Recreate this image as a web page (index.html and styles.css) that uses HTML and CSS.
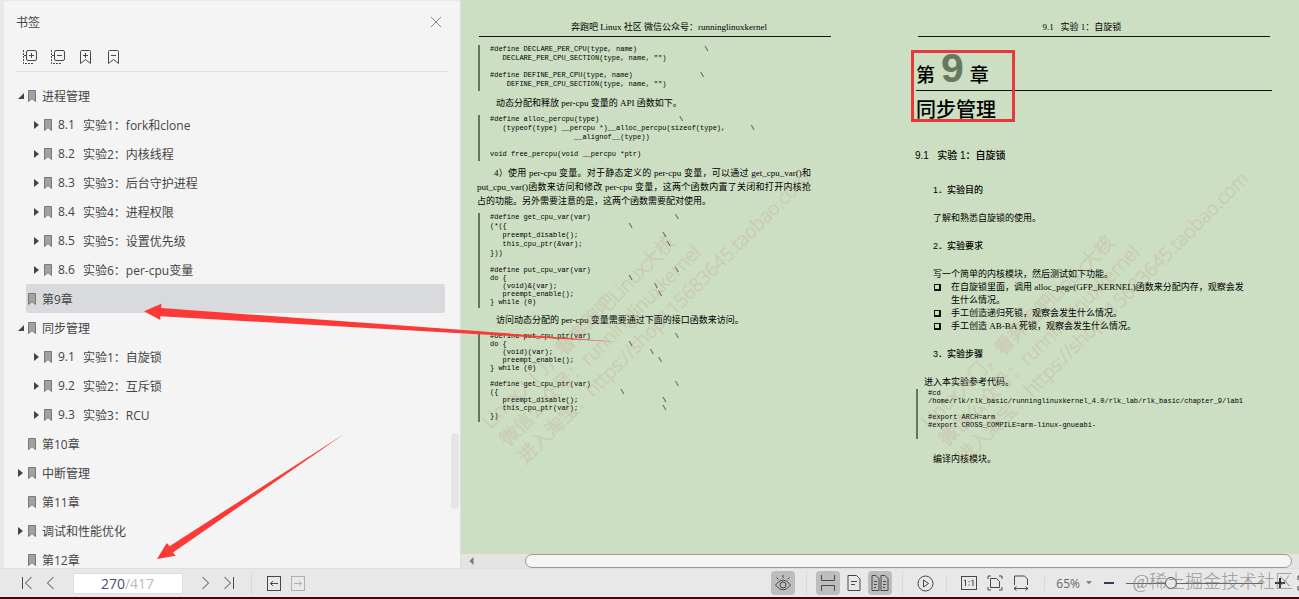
FILE: index.html
```html
<!DOCTYPE html>
<html lang="zh-CN">

<head>
    <meta charset="utf-8">
    <title>书签</title>
    <link rel="stylesheet" href="styles.css">
</head>

<body>
    <svg width="0" height="0" class="sprite">
        <symbol id="mark" viewBox="0 0 8 12">
            <path d="M.5 .5h7v11L4 8.500l-3.500 3z" fill="#a2a2a2" stroke="#777" />
        </symbol>
    </svg>
    <div class="app">
        <div class="main">
            <aside class="sidebar">
                <div class="side-head">
                    <h1>书签</h1>
                    <button class="icon-btn" aria-label="关闭">
                        <svg width="12" height="12" viewBox="0 0 12 12"><path d="M1 1l10 10M11 1L1 11" stroke="#888" /></svg>
                    </button>
                </div>
                <div class="side-tools">
                    <button class="icon-btn" aria-label="全部展开">
                        <svg width="16" height="16" viewBox="0 0 16 16"><rect x="4.500" y="1.500" width="10" height="10" rx="1.500" /><path d="M7 6.500h5M9.500 4v5" /><path d="M1.500 1v13.500H12" stroke-dasharray="2 1" /><path d="M2 6.500h2" /></svg>
                    </button>
                    <button class="icon-btn" aria-label="全部收起">
                        <svg width="16" height="16" viewBox="0 0 16 16"><rect x="4.500" y="1.500" width="10" height="10" rx="1.500" /><path d="M7 6.500h5" /><path d="M1.500 1v13.500H12" stroke-dasharray="2 1" /><path d="M2 6.500h2" /></svg>
                    </button>
                    <button class="icon-btn" aria-label="添加书签">
                        <svg width="16" height="16" viewBox="0 0 16 16"><path d="M2.500 2.500q0-1 1-1h8q1 0 1 1v12l-5-4-5 4z" /><path d="M5 6.500h5M7.500 4v5" /></svg>
                    </button>
                    <button class="icon-btn" aria-label="删除书签">
                        <svg width="16" height="16" viewBox="0 0 16 16"><path d="M2.500 2.500q0-1 1-1h8q1 0 1 1v12l-5-4-5 4z" /><path d="M5 6.500h5" /></svg>
                    </button>
                </div>
                <ul class="tree">
                    <li class="open"><svg class="mark"><use href="#mark" /></svg>进程管理</li>
                    <li class="sub closed"><svg class="mark"><use href="#mark" /></svg><span class="num">8.1</span>实验1：fork和clone</li>
                    <li class="sub closed"><svg class="mark"><use href="#mark" /></svg><span class="num">8.2</span>实验2：内核线程</li>
                    <li class="sub closed"><svg class="mark"><use href="#mark" /></svg><span class="num">8.3</span>实验3：后台守护进程</li>
                    <li class="sub closed"><svg class="mark"><use href="#mark" /></svg><span class="num">8.4</span>实验4：进程权限</li>
                    <li class="sub closed"><svg class="mark"><use href="#mark" /></svg><span class="num">8.5</span>实验5：设置优先级</li>
                    <li class="sub closed"><svg class="mark"><use href="#mark" /></svg><span class="num">8.6</span>实验6：per-cpu变量</li>
                    <li class="current"><svg class="mark"><use href="#mark" /></svg>第9章</li>
                    <li class="open"><svg class="mark"><use href="#mark" /></svg>同步管理</li>
                    <li class="sub closed"><svg class="mark"><use href="#mark" /></svg><span class="num">9.1</span>实验1：自旋锁</li>
                    <li class="sub closed"><svg class="mark"><use href="#mark" /></svg><span class="num">9.2</span>实验2：互斥锁</li>
                    <li class="sub closed"><svg class="mark"><use href="#mark" /></svg><span class="num">9.3</span>实验3：RCU</li>
                    <li><svg class="mark"><use href="#mark" /></svg>第10章</li>
                    <li class="closed"><svg class="mark"><use href="#mark" /></svg>中断管理</li>
                    <li><svg class="mark"><use href="#mark" /></svg>第11章</li>
                    <li class="closed"><svg class="mark"><use href="#mark" /></svg>调试和性能优化</li>
                    <li><svg class="mark"><use href="#mark" /></svg>第12章</li>
                </ul>
                <div class="side-thumb"></div>
            </aside>

            <section class="viewer">
                <div class="spread">
                    <article class="page">
                        <div class="watermark">Linux入门，看奔跑吧Linux大核<br>微信公众号：runninglinuxkernel<br>进入淘宝：https://shop115683645.taobao.com</div>
                        <header class="running">奔跑吧 Linux 社区 微信公众号：runninglinuxkernel</header>
                        <div class="code">
<pre>#define DECLARE_PER_CPU(type, name)                \
   DECLARE_PER_CPU_SECTION(type, name, "")</pre>
<pre>#define DEFINE_PER_CPU(type, name)                \
    DEFINE_PER_CPU_SECTION(type, name, "")</pre>
                        </div>
                        <p class="indent">动态分配和释放 per-cpu 变量的 API 函数如下。</p>
                        <div class="code">
<pre>#define alloc_percpu(type)                   \
   (typeof(type) __percpu *)__alloc_percpu(sizeof(type),      \
                    __alignof__(type))</pre>
<pre>void free_percpu(void __percpu *ptr)</pre>
                        </div>
                        <p class="indent wide">4）使用 per-cpu 变量。对于静态定义的 per-cpu 变量，可以通过 get_cpu_var()和put_cpu_var()函数来访问和修改 per-cpu 变量，这两个函数内置了关闭和打开内核抢占的功能。另外需要注意的是，这两个函数需要配对使用。</p>
                        <div class="code">
<pre>#define get_cpu_var(var)                    \
(*({                             \
   preempt_disable();                    \
   this_cpu_ptr(&amp;var);                    \
}))</pre>
<pre class="tight">#define put_cpu_var(var)                    \
do {                             \
   (void)&amp;(var);                       \
   preempt_enable();                    \
} while (0)</pre>
                        </div>
                        <p class="indent">访问动态分配的 per-cpu 变量需要通过下面的接口函数来访问。</p>
                        <div class="code">
<pre class="tight">#define put_cpu_ptr(var)                    \
do {                             \
   (void)(var);                       \
   preempt_enable();                    \
} while (0)</pre>
<pre class="tight">#define get_cpu_ptr(var)                    \
({                             \
   preempt_disable();                    \
   this_cpu_ptr(var);                    \
})</pre>
                        </div>
                    </article>

                    <article class="page chapter">
                        <div class="watermark">Linux入门，看奔跑吧Linux大核<br>微信公众号：runninglinuxkernel<br>进入淘宝：https://shop115683645.taobao.com</div>
                        <header class="running">9.1 &nbsp; 实验 1：自旋锁</header>
                        <div class="chapter-no">第<b>9</b>章</div>
                        <h2>同步管理</h2>
                        <div class="red-box"></div>
                        <h3>9.1 &nbsp; 实验 1：自旋锁</h3>
                        <div class="body">
                            <h4>1．实验目的</h4>
                            <p>了解和熟悉自旋锁的使用。</p>
                            <h4>2．实验要求</h4>
                            <p>写一个简单的内核模块，然后测试如下功能。</p>
                            <ul class="tasks">
                                <li>在自旋锁里面，调用 alloc_page(GFP_KERNEL)函数来分配内存，观察会发生什么情况。</li>
                                <li>手工创造递归死锁，观察会发生什么情况。</li>
                                <li>手工创造 AB-BA 死锁，观察会发生什么情况。</li>
                            </ul>
                            <h4>3．实验步骤</h4>
                        </div>
                        <p class="enter">进入本实验参考代码。</p>
                        <div class="code shell">
<pre class="tight">#cd
/home/rlk/rlk_basic/runninglinuxkernel_4.0/rlk_lab/rlk_basic/chapter_9/lab1</pre>
<pre class="tight">#export ARCH=arm
#export CROSS_COMPILE=arm-linux-gnueabi-</pre>
                        </div>
                        <div class="body">
                            <p>编译内核模块。</p>
                        </div>
                    </article>
                </div>
                <div class="hscroll">
                    <svg width="5" height="8" viewBox="0 0 5 8"><path d="M4.500 0v8L.5 4z" fill="#777" /></svg>
                    <div class="hthumb"></div>
                </div>
            </section>
        </div>

        <footer class="status">
            <div class="group nav">
                <button class="icon-btn" aria-label="第一页"><svg width="12" height="14" viewBox="0 0 12 14"><path d="M1.500 1v12M10.500 1l-6 6 6 6" /></svg></button>
                <button class="icon-btn" aria-label="上一页"><svg width="12" height="14" viewBox="0 0 12 14"><path d="M8.500 1l-6 6 6 6" /></svg></button>
                <label class="page-box"><input type="text" value="270" aria-label="页码"><span>/417</span></label>
                <button class="icon-btn" aria-label="下一页"><svg width="12" height="14" viewBox="0 0 12 14"><path d="M3.500 1l6 6-6 6" /></svg></button>
                <button class="icon-btn" aria-label="最后一页"><svg width="12" height="14" viewBox="0 0 12 14"><path d="M1.500 1l6 6-6 6M10.500 1v12" /></svg></button>
            </div>
            <div class="group jump">
                <button class="icon-btn" aria-label="后退"><svg width="14" height="15" viewBox="0 0 14 15"><rect x=".5" y=".5" width="13" height="14" /><path d="M11 7.500H3.500M6 5L3.500 7.500 6 10" /></svg></button>
                <button class="icon-btn off" aria-label="前进"><svg width="14" height="15" viewBox="0 0 14 15"><rect x=".5" y=".5" width="13" height="14" /><path d="M3 7.500h7.500M8 5l2.500 2.500L8 10" /></svg></button>
            </div>
            <div class="group eye">
                <button class="tool on" aria-label="护眼模式"><svg width="18" height="18" viewBox="0 0 18 18"><path d="M1.500 11q7.500-10 15 0-7.500 10-15 0z" /><circle cx="9" cy="11" r="3" /><path d="M9 1v3M2.500 3.500l2 2M15.500 3.500l-2 2" /></svg></button>
            </div>
            <div class="group views">
                <button class="tool on" aria-label="连续阅读"><svg width="16" height="18" viewBox="0 0 16 18"><path d="M1.500 1v5.500h13V1M1.500 17v-5.500h13V17" /></svg></button>
                <button class="tool" aria-label="单页"><svg width="14" height="16" viewBox="0 0 14 16"><path d="M1 .5h8.500l3.500 3.500v11.500H1zM4 6.500h6M4 9.500h4" /></svg></button>
                <button class="tool on" aria-label="双页"><svg width="18" height="16" viewBox="0 0 18 16"><path d="M1 .5h4l3 3v12H1zM10 .5h4l3 3v12h-7zM3 6.500h3M3 9.500h3M12 6.500h3M12 9.500h3M3 12.500h2M12 12.500h2" /></svg></button>
            </div>
            <div class="group play">
                <button class="icon-btn" aria-label="播放"><svg width="17" height="17" viewBox="0 0 17 17"><circle cx="8.500" cy="8.500" r="7.500" /><path d="M6.500 5v7l5-3.500z" /></svg></button>
            </div>
            <div class="group fit">
                <button class="icon-btn" aria-label="实际大小"><svg width="16" height="14" viewBox="0 0 16 14"><rect x=".5" y=".5" width="15" height="13" /><path d="M3 5l1.500-1v6M10.500 5L12 4v6M8 5v1.200M8 8.500v1.200" /></svg></button>
                <button class="icon-btn" aria-label="适合页面"><svg width="16" height="16" viewBox="0 0 16 16"><path d="M1 4V1h3M12 1h3v3M15 12v3h-3M4 15H1v-3M3.500 3.500h6l3 3v6h-9z" /></svg></button>
                <button class="icon-btn" aria-label="适合宽度"><svg width="16" height="16" viewBox="0 0 16 16"><path d="M1.500 10V1h10l3 3v6M1 13.500h14M3.500 11.500l-2.500 2 2.500 2M12.500 11.500l2.500 2-2.500 2" /></svg></button>
            </div>
            <div class="group zoom">
                <button class="percent">65%<svg width="6" height="4" viewBox="0 0 6 4"><path d="M0 0h6L3 3.500z" fill="#888" stroke="none" /></svg></button>
                <button class="icon-btn" aria-label="缩小"><svg width="10" height="10" viewBox="0 0 10 10"><path d="M0 5h10" stroke="#2f3f55" stroke-width="2" /></svg></button>
                <input type="range" min="0" max="100" value="31" aria-label="缩放">
                <button class="icon-btn" aria-label="放大"><svg width="10" height="10" viewBox="0 0 10 10"><path d="M0 5h10M5 0v10" stroke="#333" stroke-width="2" /></svg></button>
                <button class="icon-btn" aria-label="全屏"><svg width="16" height="16" viewBox="0 0 16 16"><path d="M1 5V1h4M11 1h4v4M15 11v4h-4M5 15H1v-4" /></svg></button>
            </div>
            <span class="source">@稀土掘金技术社区</span>
        </footer>
    </div>

    <svg class="arrows" width="640" height="580" viewBox="0 0 640 580">
        <path d="M144 311.300L161.300 303.700V308L460 329.700L620 342L460 333.300L160.300 316.300V320z" />
        <path d="M157 559L166.700 543L169.500 546.300L344.500 433.700L173 552.500L175.700 555.700z" />
    </svg>
</body>

</html>
```
FILE: styles.css
```css
* {
    box-sizing: border-box;
}

body {
    margin: 0;
    font-family: "Open Sans", "Noto Sans CJK SC", sans-serif;
    font-size: 12px;
    color: #444;
    overflow: hidden;
}

h1, h2, h3, h4, p, ul, pre {
    margin: 0;
    padding: 0;
    font-weight: 400;
}

ul {
    list-style: none;
}

svg {
    display: block;
    fill: none;
    stroke: #484848;
}

.sprite {
    position: absolute;
}

button {
    border: 0;
    padding: 0;
    background: none;
    font: inherit;
    color: inherit;
}

.app {
    height: 100vh;
    display: flex;
    flex-direction: column;
    border-bottom: 2px solid #500008;
}

.main {
    flex: 1;
    min-height: 0;
    display: flex;
}

/* bookmarks */
.sidebar {
    position: relative;
    width: 461px;
    flex: none;
    overflow: hidden;
    background: #f4f4f4;
    border-left: 4px solid #e8e8e8;
    border-top: 1px solid #e8e8e8;
    border-right: 1px solid #dcdde6;
    padding: 0 12px;
}

.side-head {
    height: 41px;
    display: flex;
    align-items: center;
    justify-content: space-between;
    padding-right: 6px;
}

.side-head h1 {
    font-size: 12px;
}

.side-tools {
    height: 30px;
    display: flex;
    align-items: center;
    gap: 12px;
    padding-left: 6px;
    border-bottom: 1px solid #e0e0e0;
}

.tree {
    padding-top: 9px;
}

.tree li {
    position: relative;
    display: flex;
    align-items: center;
    height: 29px;
    margin: 0 3px 0 10px;
    padding-left: 2px;
    border-radius: 2px;
}

.tree li.sub {
    padding-left: 18px;
}

.tree li.current {
    background: #d9dadd;
}

.tree .mark {
    width: 8px;
    height: 12px;
    margin-right: 6px;
}

.tree .num {
    width: 25px;
}

.open::before,
.closed::before {
    content: "";
    position: absolute;
    left: -8px;
    border: 4px solid transparent;
    border-left: 5px solid #444;
    border-right: 0;
}

.open::before {
    border: 0;
    border-left: 6px solid transparent;
    border-bottom: 6px solid #444;
}

.sub.closed::before {
    left: 8px;
}

.side-thumb {
    position: absolute;
    right: 1px;
    top: 432px;
    width: 8px;
    height: 76px;
    border-radius: 4px;
    background: #e5e5e7;
}

/* document */
.viewer {
    flex: 1;
    min-width: 0;
    display: flex;
    flex-direction: column;
    background: #ccdfc2;
}

.spread {
    flex: 1;
    min-height: 0;
    display: flex;
    gap: 87px;
    padding: 20px 29px 0 18px;
    overflow: hidden;
}

.page {
    position: relative;
    flex: 1;
    min-width: 0;
    color: #000;
    font-family: "Liberation Serif", "Noto Sans CJK SC", serif;
    font-size: 9px;
    line-height: 14px;
}

.running {
    height: 17px;
    padding-left: 28px;
    text-align: center;
    border-bottom: 1px solid #111;
}

.chapter .running {
    padding-left: 0;
    padding-right: 24px;
}

.code {
    display: flex;
    flex-direction: column;
    gap: 8px;
    margin: 5px 0 5px -1px;
    padding: 0 0 2px 10px;
    border-left: 2px solid #63785b;
}

.running + .code {
    margin-top: 8px;
}

.code pre {
    font-family: "Liberation Mono", monospace;
    font-size: 7px;
    line-height: 9px;
    color: #000;
}

.code pre.tight {
    line-height: 8px;
}

.indent {
    text-indent: 17px;
}

.wide {
    margin-right: 20px;
    margin-left: -2px;
    text-align: justify;
}

.chapter-no {
    display: flex;
    align-items: baseline;
    gap: 6px;
    height: 54px;
    margin: 0 -2px;
    border-bottom: 1px solid #111;
    font-family: "Liberation Sans", "Noto Sans CJK SC", sans-serif;
    font-size: 19px;
    font-weight: 500;
    line-height: 62px;
}

.chapter-no b {
    font-family: "Liberation Sans Narrow", "Liberation Sans", sans-serif;
    font-size: 41px;
    color: #69775f;
}

.chapter h2 {
    margin-left: -2px;
    font-family: "Noto Sans CJK SC", sans-serif;
    font-size: 20px;
    font-weight: 500;
    line-height: 36px;
}

.chapter h3 {
    margin: 22px 0 20px -3px;
    font-family: "Liberation Sans", "Noto Sans CJK SC", sans-serif;
    font-size: 10px;
    line-height: 14px;
    font-weight: 500;
}

.body {
    padding-left: 15px;
}

.body h4 {
    margin: 14px 0;
    font-family: "Liberation Sans", "Noto Sans CJK SC", sans-serif;
    font-size: 9px;
    font-weight: 500;
}

.tasks {
    padding-right: 18px;
    line-height: 13px;
}

.tasks li {
    position: relative;
    padding-left: 18px;
}

.tasks li::before {
    content: "";
    position: absolute;
    left: 1px;
    top: 3px;
    width: 4px;
    height: 4px;
    border: 1px solid #111;
    border-right-width: 2px;
    border-bottom-width: 2px;
}

.enter {
    padding-left: 6px;
}

.shell {
    margin: 0 0 13px -2px;
    padding-bottom: 10px;
}

.watermark {
    position: absolute;
    left: -2px;
    top: 396px;
    transform: rotate(-45deg);
    transform-origin: 0 0;
    white-space: nowrap;
    font-family: "Open Sans", "Noto Sans CJK SC", sans-serif;
    font-size: 19px;
    font-weight: 300;
    line-height: 25px;
    color: transparent;
    -webkit-text-stroke: 1px rgba(200, 120, 110, 0.18);
}

.red-box {
    position: absolute;
    left: -7px;
    top: 30px;
    width: 104px;
    height: 72px;
    border: 3px solid #e8393a;
}

.hscroll {
    display: flex;
    align-items: center;
    height: 14px;
    background: #e4e4e4;
    padding: 0 7px 0 8px;
    gap: 51px;
}

.hscroll svg {
    stroke: none;
}

.hthumb {
    flex: 1;
    height: 14px;
    border: 1px solid #999;
    border-radius: 7px;
    background: #f5f4f5;
}

/* status bar */
.status {
    position: relative;
    height: 29px;
    flex: none;
    display: flex;
    align-items: center;
    background: #e8e8e8;
    border-top: 1px solid #dedede;
    overflow: hidden;
}

.group {
    display: flex;
    align-items: center;
    flex: none;
}

.nav {
    gap: 12px;
    padding: 0 16px 0 21px;
    border-right: 1px solid #d8d8d8;
}

.page-box {
    display: flex;
    justify-content: center;
    align-items: center;
    width: 110px;
    height: 21px;
    margin: 0 4px;
    padding-right: 3px;
    background: #fff;
    border: 1px solid #ddd;
    font-size: 14px;
    color: #bbb;
}

.page-box input {
    width: 26px;
    border: 0;
    padding: 0;
    background: none;
    font: inherit;
    text-align: right;
    color: #43506e;
}

.jump {
    gap: 10px;
    padding-left: 15px;
}

.off svg {
    stroke: #b0b0b0;
}

.eye {
    margin-left: auto;
    padding-right: 11px;
    border-right: 1px solid #d8d8d8;
}

.tool {
    width: 24px;
    height: 24px;
    display: flex;
    align-items: center;
    justify-content: center;
    border-radius: 4px;
}

.tool.on {
    background: #bdbdbd;
}

.views {
    gap: 2px;
    padding: 0 10px 0 9px;
    border-right: 1px solid #d8d8d8;
}

.play {
    padding: 0 12px 0 14px;
    border-right: 1px solid #d8d8d8;
}

.fit {
    gap: 10px;
    padding: 0 15px 0 14px;
    border-right: 1px solid #d8d8d8;
}

.zoom {
    gap: 12px;
    padding-left: 11px;
    margin-right: -14px;
}

.percent {
    display: flex;
    align-items: center;
    gap: 6px;
    color: #666;
}

.zoom input {
    appearance: none;
    width: 137px;
    height: 12px;
    margin: 0;
    background: linear-gradient(#666, #666) center / 100% 1px no-repeat;
}

.zoom input::-webkit-slider-thumb {
    appearance: none;
    width: 12px;
    height: 12px;
    border: 1px solid #555;
    border-radius: 50%;
    background: #e8e8e8;
}

.source {
    position: absolute;
    right: 6px;
    top: 0;
    font-family: "Liberation Serif", "Noto Sans CJK SC", serif;
    font-size: 18px;
    font-weight: 300;
    line-height: 27px;
    color: rgba(130, 130, 130, 0.8);
}

.arrows {
    position: absolute;
    left: 0;
    top: 0;
    fill: #fb3a38;
    stroke: none;
    pointer-events: none;
}
```
